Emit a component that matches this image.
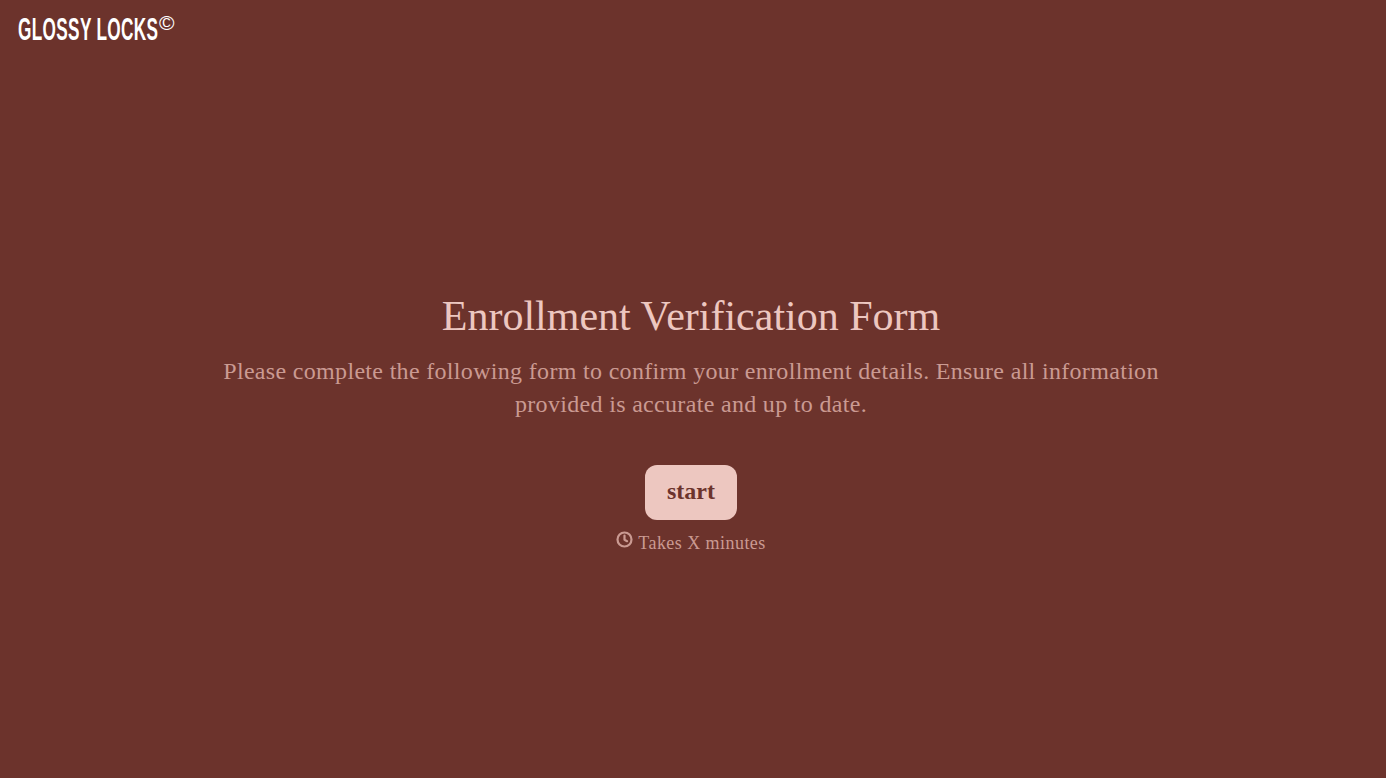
<style>
  :global(body) { margin: 0; background: #6c332c; }
  .page { height: 778px; display: flex; flex-direction: column; font-family: "Liberation Serif", serif; overflow: hidden; }
  .logo { display: flex; align-items: flex-start; padding: 14px 0 0 18px; height: 40px; box-sizing: border-box; color: #fff; }
  .name { font-family: "Liberation Sans", sans-serif; font-weight: 700; font-size: 31px; line-height: 32px; letter-spacing: .6px; transform: scaleX(.555); transform-origin: 0 0; width: 141px; white-space: nowrap; }
  .mark { font-family: "Liberation Sans", sans-serif; font-size: 21px; line-height: 20px; margin: -1px 0 0 0; }
  .main { flex: 1; display: flex; flex-direction: column; align-items: center; padding: 253px 4px 0 0; }
  h1 { margin: 0; font-weight: 400; font-size: 42px; line-height: 46px; color: #edc7c0; white-space: nowrap; }
  p { margin: 16px 0 0; width: 960px; text-align: center; font-size: 24px; line-height: 33px; letter-spacing: .32px; color: #ca9a92; }
  button { margin-top: 44px; width: 92px; height: 55px; border: 0; border-radius: 12px; background: #edc7c0; color: #6c332c; font: 700 24px "Liberation Serif", serif; padding: 0 0 3px; }
  .note { display: flex; align-items: flex-start; gap: 5px; margin-top: 11px; color: #ca9a92; font-size: 18px; line-height: 24px; letter-spacing: .45px; }
  svg { display: block; }
</style>

<div class="page">
  <header class="logo"><span class="name">GLOSSY LOCKS</span><span class="mark">©</span></header>
  <main class="main">
    <h1>Enrollment Verification Form</h1>
    <p>Please complete the following form to confirm your enrollment details. Ensure all information provided is accurate and up to date.</p>
    <button>start</button>
    <div class="note">
      <svg width="17" height="17" viewBox="0 0 17 17" fill="none" stroke="#ca9a92" stroke-width="2.2" stroke-linecap="round" stroke-linejoin="round"><circle cx="8.5" cy="8.5" r="7"/><path d="M8.5 4.5v4.2l2.6 1.5"/></svg>
      <span>Takes X minutes</span>
    </div>
  </main>
</div>
